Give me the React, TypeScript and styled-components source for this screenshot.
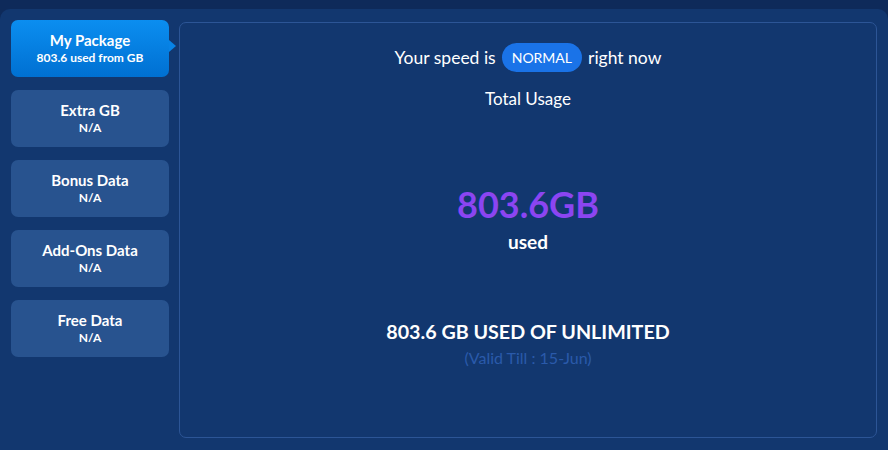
import React from 'react'
import styled, { createGlobalStyle } from 'styled-components'

const GlobalStyle = createGlobalStyle`
  html, body {
    margin: 0;
    padding: 0;
    background: #0e2a5a;
    font-family: 'Lato', 'Noto Sans', sans-serif;
  }
`;

type Item = { title: string; sub: string; active?: boolean };

const items: Item[] = [
  { title: 'My Package', sub: '803.6 used from GB', active: true },
  { title: 'Extra GB', sub: 'N/A' },
  { title: 'Bonus Data', sub: 'N/A' },
  { title: 'Add-Ons Data', sub: 'N/A' },
  { title: 'Free Data', sub: 'N/A' },
];

const App: React.FC = () => {
  return (
    <>
      <GlobalStyle />
      <Page>
        <Panel>
          <Sidebar>
            {items.map((item) => (
              <Tab key={item.title} $active={item.active}>
                <TabTitle>{item.title}</TabTitle>
                <TabSub>{item.sub}</TabSub>
              </Tab>
            ))}
          </Sidebar>
          <Content>
            <SpeedLine>
              Your speed is <Pill>NORMAL</Pill> right now
            </SpeedLine>
            <Label>Total Usage</Label>
            <BigNumber>803.6GB</BigNumber>
            <Used>used</Used>
            <Summary>803.6 GB USED OF UNLIMITED</Summary>
            <Valid>(Valid Till : 15-Jun)</Valid>
          </Content>
        </Panel>
      </Page>
    </>
  )
}

export default App

const Page = styled.div`
  width: 888px;
  height: 450px;
  padding-top: 9px;
  box-sizing: border-box;
  background: #0e2a5a;
  overflow: hidden;
`;

const Panel = styled.div`
  display: flex;
  gap: 10px;
  height: 451px;
  box-sizing: border-box;
  padding: 11px 11px 0 11px;
  background: #12376f;
  border-radius: 10px;
`;

const Sidebar = styled.div`
  display: flex;
  flex-direction: column;
  gap: 13px;
  width: 158px;
  flex-shrink: 0;
`;

const Tab = styled.div<{ $active?: boolean }>`
  position: relative;
  display: flex;
  flex-direction: column;
  align-items: center;
  justify-content: center;
  height: 57px;
  padding-bottom: 1px;
  box-sizing: border-box;
  border-radius: 7px;
  color: #ffffff;
  background: ${(p) => (p.$active ? 'linear-gradient(180deg, #0b8ef0 0%, #0070d2 100%)' : '#28538f')};
  ${(p) =>
    p.$active &&
    `
    &::after {
      content: '';
      position: absolute;
      right: -7px;
      top: 20px;
      border-top: 6px solid transparent;
      border-bottom: 6px solid transparent;
      border-left: 7px solid #0783e6;
    }
  `}
`;

const TabTitle = styled.div`
  font-size: 15px;
  font-weight: 700;
  line-height: 18px;
`;

const TabSub = styled.div`
  font-size: 12px;
  font-weight: 700;
  line-height: 15px;
  margin-top: 1px;
`;

const Content = styled.div`
  flex: 1;
  height: 416px;
  margin-top: 2px;
  box-sizing: border-box;
  border: 1px solid #2c5596;
  border-radius: 7px;
  display: flex;
  flex-direction: column;
  align-items: center;
  padding-top: 20px;
  color: #ffffff;
`;

const SpeedLine = styled.div`
  display: flex;
  align-items: center;
  gap: 6px;
  font-size: 17.5px;
  line-height: 29px;
`;

const Pill = styled.span`
  display: inline-flex;
  align-items: center;
  height: 29px;
  padding: 0 10px;
  border-radius: 15px;
  background: #1a73e8;
  font-size: 14px;
`;

const Label = styled.div`
  margin-top: 16px;
  font-size: 17px;
  line-height: 22px;
`;

const BigNumber = styled.div`
  margin-top: 72px;
  font-size: 36px;
  font-weight: 700;
  line-height: 44px;
  color: #8b45f2;
`;

const Used = styled.div`
  margin-top: 4px;
  font-size: 19px;
  font-weight: 700;
  line-height: 24px;
`;

const Summary = styled.div`
  margin-top: 66px;
  font-size: 19.7px;
  font-weight: 700;
  line-height: 24px;
`;

const Valid = styled.div`
  margin-top: 5px;
  font-size: 16px;
  line-height: 18px;
  color: #2a5aaa;
`;
